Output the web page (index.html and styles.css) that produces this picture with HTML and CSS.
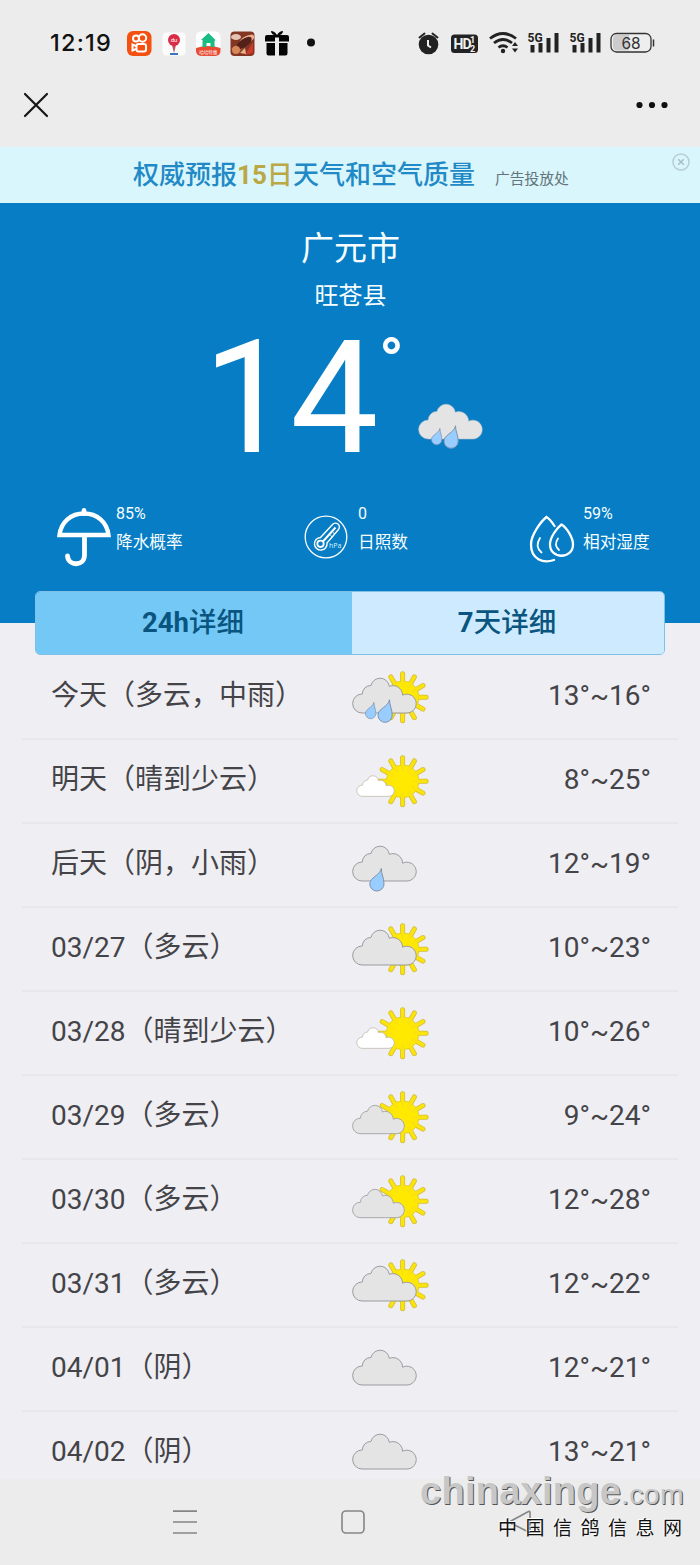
FILE: index.html
```html
<!DOCTYPE html>
<html lang="zh-CN">
<head>
<meta charset="utf-8">
<title>广元市天气</title>
<link rel="stylesheet" href="styles.css">
</head>
<body>
<svg class="defs" width="0" height="0" aria-hidden="true">
  <defs>
    <path id="ray" d="M0-12V-23.500"/>
    <g id="rays">
      <use href="#ray"/><use href="#ray" transform="rotate(30)"/><use href="#ray" transform="rotate(60)"/>
      <use href="#ray" transform="rotate(90)"/><use href="#ray" transform="rotate(120)"/><use href="#ray" transform="rotate(150)"/>
      <use href="#ray" transform="rotate(180)"/><use href="#ray" transform="rotate(210)"/><use href="#ray" transform="rotate(240)"/>
      <use href="#ray" transform="rotate(270)"/><use href="#ray" transform="rotate(300)"/><use href="#ray" transform="rotate(330)"/>
    </g>
    <g id="sun" transform="translate(52.6 30.3)">
      <use href="#rays" stroke="#d3be3a" stroke-width="5" stroke-linecap="round"/>
      <circle r="16.4" fill="#ffe900" stroke="#dcc62e" stroke-width=".8"/>
      <use href="#rays" stroke="#fbe30c" stroke-width="3.4" stroke-linecap="round"/>
    </g>
    <path id="cloud" d="M12 46A9.5 9.5 0 0 1 12.3 27A8.5 8.5 0 0 1 21 18.5A9.3 9.3 0 0 1 39.3 19.3A9.7 9.7 0 0 1 52.6 28.2A9.400 9.400 0 1 1 57 46Z"/>
    <path id="drop" d="M11.5 0C10.5 7 0 8.500 0 15.500A7.100 7 0 0 0 14.200 15.500C14.200 9 11.500 6 11.500 0Z"/>
    <g id="drops" fill="#99ccff" stroke="#7d93ad">
      <use href="#drop" transform="translate(15.500 35.300) scale(.73)"/>
      <use href="#drop" transform="translate(28 32.800)"/>
    </g>
    <g id="w-cloud"><use href="#cloud" fill="#e4e4e4" stroke="#9b9b9f"/></g>
    <g id="w-cloudy"><use href="#sun"/><use href="#w-cloud"/></g>
    <g id="w-cloudy-s"><use href="#sun"/><use href="#w-cloud" transform="translate(.4 9.200) scale(.815)"/></g>
    <g id="w-fair"><use href="#sun"/><use href="#cloud" fill="#fff" stroke="#bdb9a8" stroke-width="1.300" transform="translate(5.200 18.200) scale(.59)"/></g>
    <g id="w-rain"><use href="#w-cloudy"/><use href="#drops"/></g>
    <g id="w-drizzle"><use href="#w-cloud"/><use href="#drop" fill="#99ccff" stroke="#7d93ad" transform="translate(19.800 33.500)"/></g>
  </defs>
</svg>
<div class="screen">
  <header class="top">
    <div class="status">
      <span class="clock">12:19</span>
      <svg class="apps" width="200" height="30" viewBox="0 0 200 30">
        <rect x="7" y="3" width="24.500" height="25" rx="6" fill="#f4500f"/>
        <g fill="none" stroke="#fff" stroke-width="2"><circle cx="16" cy="10.500" r="3"/><circle cx="22.500" cy="10" r="3.700"/><rect x="16.500" y="16" width="9.500" height="7.500" rx="2"/><path d="M16 18l-3.500-1.500v6L16 21"/></g>
        <rect x="42.500" y="4.500" width="23" height="23" rx="4" fill="#fbfbfb"/>
        <path d="M54 25l-2-8h4z" fill="#c84a5f"/><circle cx="54" cy="12" r="6" fill="#da2c45"/><path d="M50 26h8" stroke="#3977c4" stroke-width="2"/>
        <text x="54" y="14" class="app-text du">du</text>
        <rect x="76" y="3.500" width="24.500" height="24.500" rx="5" fill="#fff"/>
        <path d="M76 20q12-4 24.500 0v3a5 5 0 0 1-5 5H81a5 5 0 0 1-5-5z" fill="#e84b32"/>
        <path d="M81 12l7.500-7 7 7-1 1v6h-4v-4h-4v4h-4v-7z" fill="#19bc82"/>
        <text x="88.200" y="25.500" class="app-text tiny">哈哈特惠</text>
        <rect x="110.500" y="3.500" width="24" height="24.500" rx="4" fill="#833624"/>
        <path d="M111 21l21-15 2 4-15 14z" fill="#bd6136"/><ellipse cx="127" cy="11.500" rx="8" ry="3.500" transform="rotate(-25 127 11.500)" fill="#eab08e"/><ellipse cx="116" cy="9" rx="5" ry="3" fill="#e4c3b2"/><ellipse cx="124" cy="15" rx="9" ry="4" transform="rotate(-35 124 15)" fill="#54201a"/><circle cx="116" cy="22" r="4" fill="#d78659"/><path d="M133 14v11l-8 2z" fill="#ce382c"/><path d="M120 25l5-5 1 6z" fill="#e8b68e"/>
        <path d="M145 9q0-2 2-2h20q2 0 2 2v4.500h-10v-4h-4v4H145zM146.500 15h8.500v12.500h-6.500q-2 0-2-2zM159 15h8.500v10.500q0 2-2 2h-6.500zM157 7.500q-6-.5-6-4.500 3.500 0 6 4 2.500-4 6-4 0 4-6 4.500z" fill="#050505"/>
        <circle cx="191" cy="14.500" r="4" fill="#111"/>
      </svg>
      <svg class="signals" width="240" height="30" viewBox="0 0 240 30">
        <g fill="#222">
          <circle cx="13.500" cy="16.500" r="9.800"/><path d="M4.500 9.500l5-4M22.500 9.500l-5-4" stroke="#222" stroke-width="2" stroke-linecap="round"/>
          <path d="M13 12v5.500l3 2" fill="none" stroke="#eee" stroke-width="2"/>
          <rect x="36" y="6.500" width="27" height="18.500" rx="3.500"/>
          <path d="M75 10.500q13-10 26 0M79 15q9-7 18 0M83.500 19.500q4.500-3.500 9 0" fill="none" stroke="#222" stroke-width="2.800"/><circle cx="88" cy="23" r="2.200"/>
          <path d="M97 18l3-4 3 4zM97 20.500h6l-3 4z"/>
          <path d="M115.500 17h4v7.500h-4zM123.500 15h4v9.500h-4zM131.500 10h4v14.500h-4zM139.500 5h4v19.500h-4zM157.500 17h4v7.500h-4zM165.500 15h4v9.500h-4zM173.500 10h4v14.500h-4zM181.500 5h4v19.500h-4z"/>
        </g>
        <text x="38.500" y="21" class="hd">HD</text><text x="55" y="14.500" class="sm">1</text><text x="55" y="23.500" class="sm">2</text>
        <text x="112.500" y="13.500" class="g5">5G</text><text x="154.500" y="13.500" class="g5">5G</text>
        <rect x="196" y="5.500" width="40" height="18.500" rx="5.500" fill="#eee" stroke="#333" stroke-width="1.300"/>
        <path d="M202 7h12v15.500h-12q-4 0-4-4V11q0-4 4-4z" fill="#ccc"/><path d="M238.500 11.500v7" stroke="#333" stroke-width="1.500"/>
        <text x="216" y="20.500" class="pct">68</text>
      </svg>
    </div>
    <div class="titlebar">
      <svg width="26" height="26" viewBox="0 0 26 26"><path d="M2 2L24 24M24 2L2 24" stroke="#161616" stroke-width="2.200" stroke-linecap="round"/></svg>
      <svg width="34" height="8" viewBox="0 0 34 8" fill="#111"><circle cx="4.500" cy="4" r="3.100"/><circle cx="17" cy="4" r="3.100"/><circle cx="29.500" cy="4" r="3.100"/></svg>
    </div>
  </header>
  <div class="ad">
    <span class="ad-main">权威预报<em><b>15</b>日</em>天气和空气质量</span>
    <span class="ad-note">广告投放处</span>
    <svg class="ad-close" width="20" height="20" viewBox="0 0 20 20" fill="none" stroke="#b6cdd6"><circle cx="10" cy="10" r="8" stroke-width="1.500"/><path d="M7.200 7.200l5.600 5.600m0-5.600l-5.600 5.600" stroke-width="1.600" stroke="#a9bec7"/></svg>
  </div>
  <section class="hero">
    <h1>广元市</h1>
    <h2>旺苍县</h2>
    <div class="now">
      <span class="temp">14</span><span class="deg">°</span>
      <svg width="80" height="60" viewBox="0 0 80 60"><use href="#cloud" fill="#e4e4e4" stroke="#b9c3c9" stroke-width=".6"/><use href="#drops"/></svg>
    </div>
    <div class="stats">
      <div class="stat">
        <svg width="56" height="64" viewBox="0 0 56 64" fill="none" stroke="#fff"><path d="M3.500 30C5 17 15 8.500 28 8.500S51 17 52.500 30Z" stroke-width="4.400"/><path d="M28 5.500v3M28.500 31V50c0 11.500-16 11.500-17 1" stroke-width="4.800" stroke-linecap="round"/></svg>
        <div><p>85%</p><p>降水概率</p></div>
      </div>
      <div class="stat">
        <svg width="46" height="46" viewBox="0 0 46 46" fill="none" stroke="#fff"><circle cx="23" cy="23" r="20.800" stroke-width="1.300"/><path d="M29.500 10.500a3.900 3.900 0 0 1 6 5L24 29a6.300 6.300 0 1 1-6.500-5.500z" stroke-width="1.400"/><circle cx="17.500" cy="29.800" r="3.200" stroke-width="1.800"/><path d="M19.500 28L32.500 13.500" stroke-width="2"/><path d="M32 20l-2-1.500M29.500 23l-2-1.500"/><text x="26" y="33.500" class="hpa">hPa</text></svg>
        <div><p>0</p><p>日照数</p></div>
      </div>
      <div class="stat">
        <svg width="48" height="50" viewBox="0 0 48 50" fill="none" stroke="#fff" stroke-width="2.300" stroke-linecap="round"><path d="M26.500 12Q22 5 18.500 3C14 6.500 3 20 3 30.500C3 45 15 50 26 46"/><path d="M33.500 10.500C29 14 22 23 22 30.500C22 45.500 45 45.500 45 30.500C45 23 38 13 33.500 10.500Z"/><path d="M12 24Q6.500 32.500 13.500 38.500M30 24.500Q25.500 31 31 36" stroke-width="1.800"/></svg>
        <div><p>59%</p><p>相对湿度</p></div>
      </div>
    </div>
  </section>
  <main class="forecast">
    <div class="tabs"><div class="tab active"><b>24h</b>详细</div><div class="tab"><b>7</b>天详细</div></div>
    <ul class="days">
      <li><span>今天（多云，中雨）</span><svg viewBox="0 0 80 60"><use href="#w-rain"/></svg><span class="range">13°~16°</span></li>
      <li><span>明天（晴到少云）</span><svg viewBox="0 0 80 60"><use href="#w-fair"/></svg><span class="range">8°~25°</span></li>
      <li><span>后天（阴，小雨）</span><svg viewBox="0 0 80 60"><use href="#w-drizzle"/></svg><span class="range">12°~19°</span></li>
      <li><span>03/27（多云）</span><svg viewBox="0 0 80 60"><use href="#w-cloudy"/></svg><span class="range">10°~23°</span></li>
      <li><span>03/28（晴到少云）</span><svg viewBox="0 0 80 60"><use href="#w-fair"/></svg><span class="range">10°~26°</span></li>
      <li><span>03/29（多云）</span><svg viewBox="0 0 80 60"><use href="#w-cloudy-s"/></svg><span class="range">9°~24°</span></li>
      <li><span>03/30（多云）</span><svg viewBox="0 0 80 60"><use href="#w-cloudy-s"/></svg><span class="range">12°~28°</span></li>
      <li><span>03/31（多云）</span><svg viewBox="0 0 80 60"><use href="#w-cloudy"/></svg><span class="range">12°~22°</span></li>
      <li><span>04/01（阴）</span><svg viewBox="0 0 80 60"><use href="#w-cloud"/></svg><span class="range">12°~21°</span></li>
      <li><span>04/02（阴）</span><svg viewBox="0 0 80 60"><use href="#w-cloud"/></svg><span class="range">13°~21°</span></li>
    </ul>
  </main>
  <nav class="navbar">
    <svg width="26" height="26" viewBox="0 0 26 26" stroke="#858585" stroke-width="1.700"><path d="M1 2.200H25M1 13H25M1 24H25"/></svg>
    <svg width="26" height="26" viewBox="0 0 26 26" fill="none" stroke="#858585" stroke-width="1.600"><rect x="2" y="2" width="22" height="22" rx="4"/></svg>
    <svg width="26" height="26" viewBox="0 0 26 26" fill="none" stroke="#858585" stroke-width="1.600"><path d="M22 3.500V22.500Q22 24 20.500 23L3 14.200Q1.500 13 3 12L20.500 2.500Q22 2 22 3.500Z"/></svg>
  </nav>
  <div class="watermark">
    <div class="wm-site">chinaxinge<small>.com</small></div>
    <div class="wm-name">中国信鸽信息网</div>
  </div>
</div>
</body>
</html>
```
FILE: styles.css
```css
* { box-sizing: border-box; margin: 0; padding: 0; }
body { font-family: Roboto, "Noto Sans CJK SC", sans-serif; background: #ececec; color: #444448; }
svg { display: block; flex: none; }
.defs { position: absolute; }
.screen { position: relative; width: 700px; height: 1565px; overflow: hidden; }

.top { height: 147px; background: #ececec; }
.status { display: flex; align-items: center; height: 58px; padding: 28px 44px 0 50px; }
.clock { flex: none; width: 70px; font: 500 23.5px/30px Inter, sans-serif; letter-spacing: 1.2px; color: #111; white-space: nowrap; }
.signals { margin-left: auto; margin-right: 1px; }
.app-text { fill: #fff; text-anchor: middle; font-family: Roboto, "Noto Sans CJK SC", sans-serif; }
.du { font-size: 6px; }
.tiny { font-size: 4.5px; }
.hd { font: 700 14px Roboto, sans-serif; fill: #f2f2f2; letter-spacing: -1px; }
.sm { font: 700 9px Roboto, sans-serif; fill: #f2f2f2; }
.g5 { font: 700 12px Roboto, sans-serif; fill: #222; }
.pct { font: 400 15.5px Inter, sans-serif; fill: #333; text-anchor: middle; }
.titlebar { display: flex; justify-content: space-between; align-items: center; height: 94px; padding: 0 31px 0 23px; }

.ad { display: flex; align-items: center; height: 56px; background: #d9f6fc; padding: 0 9px 0 133px; }
.ad-main { font-size: 26px; line-height: 54px; color: #2189c5; font-weight: 500; white-space: nowrap; }
.ad-main em { font-style: normal; color: #baa844; }
.ad-main b { font-weight: 700; }
.ad-note { margin: 5px 0 0 20px; font-size: 14.8px; color: #64747a; }
.ad-close { margin: -26px 0 0 auto; }

.hero { height: 420px; background: #067dc5; color: #f7fdff; text-align: center; padding-top: 22px; }
h1 { font-size: 33px; line-height: 48px; font-weight: 400; padding-left: 1px; }
h2 { font-size: 24px; line-height: 36px; font-weight: 400; margin-top: 5px; padding-left: 1px; }
.now { display: flex; align-items: flex-start; height: 159px; padding-left: 203px; }
.temp { font-size: 157px; line-height: 168px; letter-spacing: -1px; width: 176px; text-align: left; color: #fff; }
.deg { font-size: 64px; font-weight: 700; line-height: 58px; width: 37px; text-align: left; color: #fff; margin-top: 20px; }
.now svg { margin-top: 79px; }
.stats { display: grid; grid-template-columns: 248px 225px 1fr; height: 70px; margin: 29px 0 0 56px; }
.stat { display: flex; align-items: flex-start; text-align: left; font-size: 16.7px; line-height: 28px; }
.stat > div { margin-top: -3px; }
.stat > svg { margin-right: 4px; }
.stat:nth-child(1) svg { margin-top: 3px; }
.stat:nth-child(2) svg { margin: 12px 9px 0 -1px; }
.stat:nth-child(3) svg { margin: 12px 7px 0 -1px; }
.stat p:first-child { font-size: 16px; line-height: 30px; }
.hpa { font: 7px "Open Sans", sans-serif; fill: #d9f6fc; stroke: none; }

.forecast { height: 856px; background: #efeef3; }
.tabs { position: relative; top: -32px; display: grid; grid-template-columns: 316px 1fr; width: 630px; height: 64px; margin: 0 0 -31px 35px; border: 1px solid #7fc0e8; border-radius: 5px; overflow: hidden; }
.tab { background: #cdeafe; color: #0a5580; font-size: 27.5px; line-height: 61px; font-weight: 500; text-align: center; padding-right: 2px; }
.tab b { font-weight: 700; }
.tab.active { background: #73c8f5; }
.days { list-style: none; margin: 0 22px; height: 823px; overflow: hidden; }
.days li { display: grid; grid-template-columns: 299px 80px 1fr; align-items: center; height: 84px; padding: 0 27px 0 29px; border-bottom: 2px solid #e8e7eb; font-size: 28px; line-height: 40px; white-space: nowrap; }
.days li span { padding-bottom: 2px; }
.days svg { width: 80px; height: 60px; margin-bottom: 1px; }
.days .range { text-align: right; }

.navbar { display: flex; justify-content: center; gap: 142px; height: 86px; padding: 30px 0 0 6px; background: #ececec; }
.watermark { position: absolute; right: 16px; top: 1471px; text-align: right; }
.wm-site { font: 700 38px/40px "Liberation Sans", sans-serif; color: #c7c7c7; text-shadow: 1px 1px 0 #555; letter-spacing: .25px; }
.wm-site small { font-size: 28.5px; font-weight: 400; letter-spacing: .3px; }
.wm-name { font: 19px/30px "Noto Sans CJK SC", sans-serif; color: #111; text-shadow: -1px -1px 0 #fff; letter-spacing: 8.5px; margin: -2px -6.5px 0 0; }
```
